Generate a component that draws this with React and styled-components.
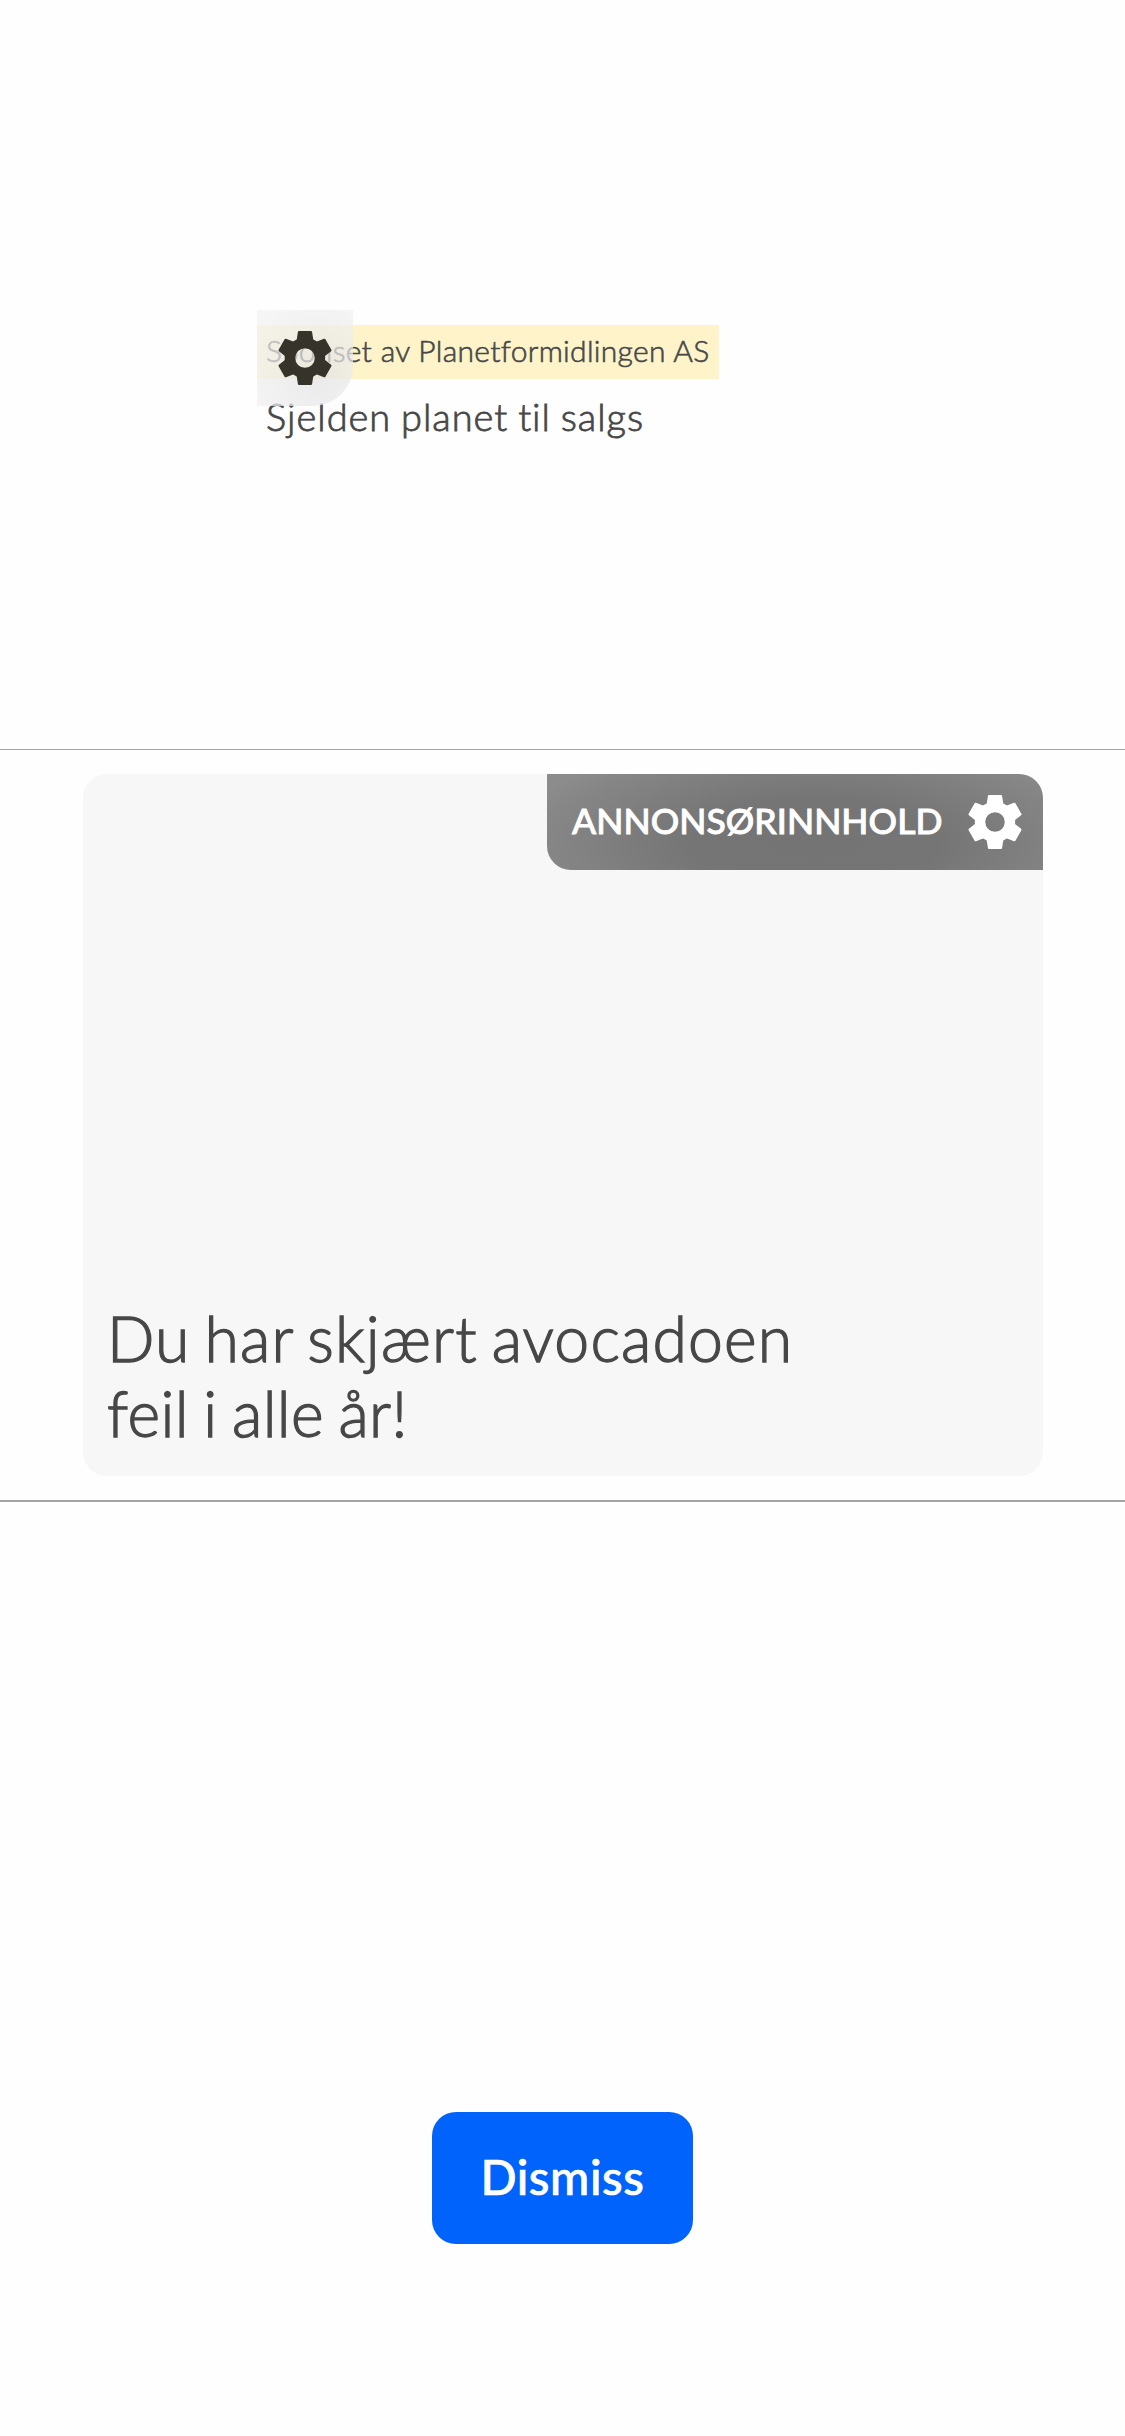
import React from "react";
import styled, { createGlobalStyle } from "styled-components";

const GlobalStyle = createGlobalStyle`
  * { box-sizing: border-box; }
  body {
    margin: 0;
    background: #fff;
    color: #474747;
    font-family: Lato, "Liberation Sans", sans-serif;
  }
`;

const Page = styled.main`
  display: flex;
  flex-direction: column;
  width: 1125px;
  height: 2436px;
  overflow: hidden;
  background: #fefefe;
`;

const CompactSection = styled.section`
  height: 750px;
  padding: 310px 0 0 257px;
  border-bottom: 1px solid #a5a5a5;
  background: #fefefe;
`;

const CompactAd = styled.article`
  position: relative;
  display: flex;
  flex-direction: column;
  align-items: flex-start;
  padding-top: 15px;
  width: 611px;
`;

const SponsorLabel = styled.div`
  width: 462px;
  height: 54px;
  padding-left: 9px;
  background: #fff4c9;
  font-size: 30px;
  font-weight: 300;
  line-height: 51px;
  letter-spacing: 0.3px;
  white-space: nowrap;
  -webkit-text-stroke: 0.6px #474747;
`;

const CompactTitle = styled.h2`
  margin: 10px 0 0;
  padding-left: 9px;
  font-size: 38px;
  font-weight: 300;
  line-height: 54px;
  letter-spacing: 0.98px;
  word-spacing: -1.5px;
  white-space: nowrap;
  -webkit-text-stroke: 0.8px #474747;
`;

const GearBadge = styled.div`
  position: absolute;
  top: 0;
  left: 0;
  display: grid;
  place-items: center;
  width: 96px;
  height: 96px;
  border-bottom-right-radius: 40px;
  background: radial-gradient(circle at 64% 66%, rgba(226, 226, 228, 0.72), rgba(243, 243, 244, 0.72) 92%);
  color: #36332a;
`;

const CardSection = styled.section`
  height: 752px;
  padding: 24px 82px 24px 83px;
  border-bottom: 2px solid #a5a5a5;
`;

const Card = styled.article`
  display: flex;
  flex-direction: column;
  justify-content: space-between;
  height: 702px;
  border-radius: 24px;
  background: #f7f7f7;
  overflow: hidden;
`;

const AdTag = styled.div`
  align-self: flex-end;
  display: flex;
  align-items: center;
  justify-content: space-between;
  width: 496px;
  height: 96px;
  padding: 0 21px 0 25px;
  border-bottom-left-radius: 24px;
  background: radial-gradient(ellipse 62% 115% at 54% 72%, #747474 0%, #757575 40%, #858585 85%, #8c8c8c 100%);
  color: #fff;
`;

const TagText = styled.span`
  padding-bottom: 2px;
  font-size: 35.5px;
  font-weight: 500;
  line-height: 44px;
  letter-spacing: 0.05px;
  white-space: nowrap;
  -webkit-text-stroke: 0.9px #fff;
`;

const CardTitle = styled.h1`
  margin: 0;
  padding: 0 24px 26px;
  font-size: 62.5px;
  font-weight: 300;
  line-height: 75px;
  -webkit-text-stroke: 1.3px #474747;
`;

const TitleLine = styled.span`
  display: block;
  letter-spacing: ${(p) => p.$tracking}px;
  word-spacing: ${(p) => p.$gap}px;
`;

const Actions = styled.footer`
  display: flex;
  flex: 1;
  align-items: flex-start;
  justify-content: center;
  padding-top: 610px;
`;

const DismissButton = styled.button`
  width: 261px;
  height: 132px;
  padding: 0 0 3px;
  border: 0;
  border-radius: 24px;
  background: #0063fb;
  color: #fff;
  font-family: inherit;
  font-size: 47.5px;
  font-weight: 500;
  line-height: 60px;
  letter-spacing: 0.6px;
  -webkit-text-stroke: 0.7px #fff;
`;

const GearSvg = styled.svg`
  display: block;
  width: 54px;
  height: 54px;
  fill: currentColor;
`;

const TEETH = [0, 60, 120, 180, 240, 300];

function Gear() {
  return (
    <GearSvg viewBox="-81.5 -81.5 163 163">
      <path
        fillRule="evenodd"
        d="M-61 0a61 61 0 1 0 122 0a61 61 0 1 0-122 0ZM-29.5 0a29.5 29.5 0 1 1 59 0a29.5 29.5 0 1 1-59 0Z"
      />
      {TEETH.map((angle) => (
        <path
          key={angle}
          transform={`rotate(${angle})`}
          d="M-18 -81.5H18Q21 -81.5 21.4 -78.5L25.5 -52L20 -45H-20L-25.5 -52L-21.4 -78.5Q-21 -81.5 -18 -81.5Z"
        />
      ))}
    </GearSvg>
  );
}

export default function App() {
  return (
    <Page>
      <GlobalStyle />
      <CompactSection>
        <CompactAd>
          <SponsorLabel>Sponset av Planetformidlingen AS</SponsorLabel>
          <CompactTitle>Sjelden planet til salgs</CompactTitle>
          <GearBadge>
            <Gear />
          </GearBadge>
        </CompactAd>
      </CompactSection>
      <CardSection>
        <Card>
          <AdTag>
            <TagText>ANNONSØRINNHOLD</TagText>
            <Gear />
          </AdTag>
          <CardTitle>
            <TitleLine $tracking={1.15} $gap={-4.2}>Du har skjært avocadoen</TitleLine>
            <TitleLine $tracking={0.4} $gap={-3}>feil i alle år!</TitleLine>
          </CardTitle>
        </Card>
      </CardSection>
      <Actions>
        <DismissButton>Dismiss</DismissButton>
      </Actions>
    </Page>
  );
}
